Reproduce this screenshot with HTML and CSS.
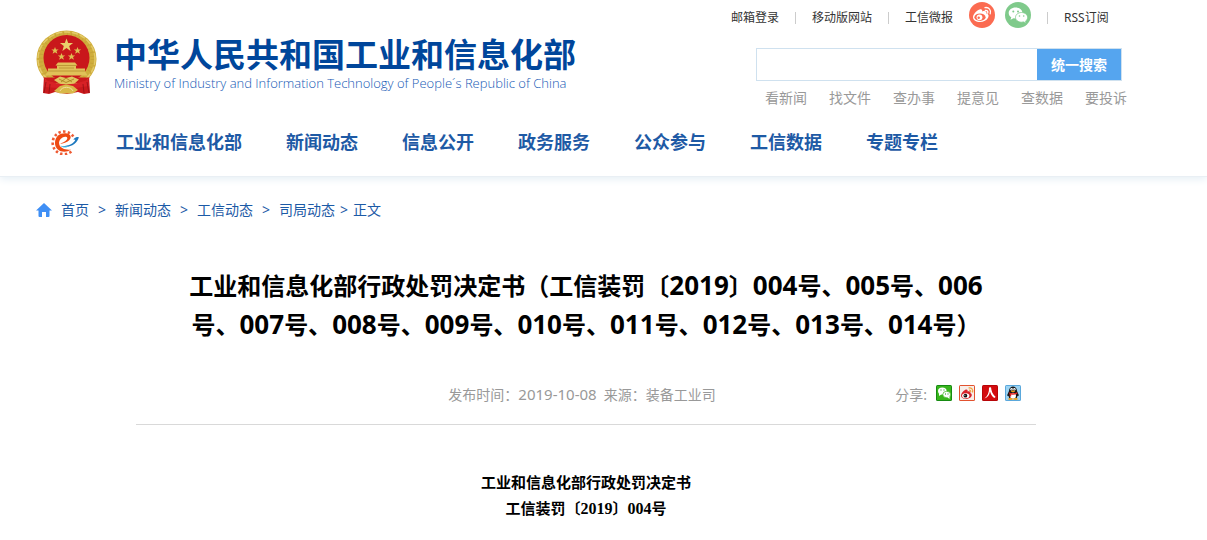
FILE: index.html
```html
<!DOCTYPE html>
<html lang="zh-CN">
<head>
<meta charset="utf-8">
<meta name="viewport" content="width=device-width, initial-scale=1">
<title>工业和信息化部行政处罚决定书</title>
<link rel="stylesheet" href="styles.css">
</head>
<body>
<header class="site-header">
  <div class="container">
    <div class="masthead">
      <a class="brand" href="#">
        <svg class="emblem" viewBox="0 0 61 66" aria-hidden="true">
          <path d="M8 46h45l1 17-6 1-6-2-11 2-12-2-6 2-6-1z" fill="#c9191c"/>
          <ellipse cx="30.500" cy="29" rx="30" ry="28.500" fill="#d0ae3c"/>
          <ellipse cx="30.500" cy="29" rx="26" ry="25" fill="none" stroke="#c6a338" stroke-width="4" stroke-dasharray="1 3"/>
          <ellipse cx="30.500" cy="29" rx="28.500" ry="27" fill="none" stroke="#e3ca69" stroke-width="1.500" stroke-dasharray="6 2"/>
          <ellipse cx="30.500" cy="28" rx="23" ry="23" fill="#c9171b"/>
          <path d="M30.500 8.500l1.700 4.600h4.900l-3.900 3 1.400 4.800-4.100-2.800-4.100 2.800 1.400-4.800-3.900-3h4.900z" fill="#e9d06b"/>
          <g fill="#dfbf52">
            <path d="M19 17l1 2.400h2.700l-2.200 1.700.9 2.700-2.400-1.500-2.400 1.500.9-2.700-2.200-1.700H18z"/>
            <path d="M41.500 17l1 2.400h2.700l-2.200 1.700.9 2.700-2.400-1.500-2.400 1.500.9-2.700-2.200-1.700h2.700z"/>
            <path d="M25.500 23l1 2.400h2.700L27 27.100l.9 2.700-2.400-1.500-2.400 1.500.9-2.700-2.200-1.700h2.700z"/>
            <path d="M35.500 23l1 2.400h2.700L37 27.100l.9 2.700-2.400-1.500-2.400 1.500.9-2.700-2.200-1.700h2.700z"/>
          </g>
          <path d="M22 32.500h17l2.500 3H40v3h9v3l3 4H9l3-4v-3h9v-3h-1.500z" fill="#e0c158"/>
          <path d="M21 35.500h19M12 41h37M23 38h15" stroke="#b58e2d" stroke-width=".8"/>
          <path d="M7 47.500h47l-6 5-9 1H22l-9-1z" fill="#c9191c"/>
          <path d="M18 50l6-3.500 6 1.500 6-1.500 7 3-5 4.500H24z" fill="#e0c45f"/>
          <path d="M23 49l7 3.500 8-3.500M25 52l5-4 6 4" fill="none" stroke="#a77d1b" stroke-width=".8"/>
          <path d="M9 50l12 3.500 9 1 10-1L52 50l1 6-13 2H21L8 57z" fill="#d72125"/>
          <path d="M18 61l6-5 6-1.500 7 1.500 5 4-5 3.500H24z" fill="#d8b848"/>
          <path d="M24 61c2-5 11-5 13 0" fill="none" stroke="#f3dfa0"/>
          <path d="M10 52l-2 11M14 54l-1 9M47 54l1 9M51 52l2 11" stroke="#8f1014" stroke-width=".8"/>
        </svg>
        <span class="brand-text">
          <span class="brand-name">中华人民共和国工业和信息化部</span>
          <span class="brand-en">Ministry of Industry and Information Technology of People´s Republic of China</span>
        </span>
      </a>
      <div class="tools">
        <div class="utility">
          <a href="#">邮箱登录</a><span class="bar"></span>
          <a href="#">移动版网站</a><span class="bar"></span>
          <a href="#">工信微报</a>
          <a class="social" href="#" aria-label="微博">
            <svg viewBox="0 0 26 26"><circle cx="13" cy="13" r="13" fill="#fb6b51"/><path d="M10.500 7.500c1.800-.8 3 .1 2.700 2 2.500-.9 4.800-.3 4.200 2 2 .6 2.700 2 1.800 4-1.300 2.900-4.700 4.500-8.200 4.500-4 0-7-1.900-7-4.800 0-2.700 3.300-6.500 6.500-7.700z" fill="#fff"/><ellipse cx="11" cy="15.200" rx="5.600" ry="3.700" fill="#fb6b51"/><circle cx="10.500" cy="15.300" r="2.900" fill="#fff"/><circle cx="9.700" cy="15.800" r="1.200" fill="#fb6b51"/><path d="M16 5.600c3.900-.7 6.500 2.600 5.200 6.200M16.300 8.400c1.900-.3 3 1 2.400 2.700" fill="none" stroke="#fff" stroke-width="1.300" stroke-linecap="round"/></svg>
          </a>
          <a class="social" href="#" aria-label="微信">
            <svg viewBox="0 0 26 26"><circle cx="13" cy="13" r="13" fill="#7fca8b"/><path d="M10.500 5.500c4 0 7 2.400 7 5.500s-3 5.400-7 5.400l-2-.2-3 1.600.8-2.500C4.600 14.300 3.700 12.800 3.700 11c0-3.100 3-5.500 6.800-5.500z" fill="#fff"/><path d="M16.500 10.500c3.500 0 6.100 2.200 6.100 4.900 0 1.500-.8 2.800-2 3.700l.6 2.100-2.500-1.300-2.200.3c-3.400 0-6-2.100-6-4.800s2.600-4.900 6-4.900z" fill="#fff" stroke="#7fca8b" stroke-width=".8"/><g fill="#7fca8b"><circle cx="8.300" cy="9.500" r="1"/><circle cx="13" cy="9.500" r="1"/><circle cx="14.500" cy="14" r=".8"/><circle cx="18.700" cy="14" r=".8"/></g></svg>
          </a>
          <span class="bar"></span>
          <a href="#">RSS订阅</a>
        </div>
        <form class="search">
          <input class="search-input" type="text" aria-label="搜索">
          <button class="search-button" type="button">统一搜索</button>
        </form>
        <div class="quick">
          <a href="#">看新闻</a><a href="#">找文件</a><a href="#">查办事</a><a href="#">提意见</a><a href="#">查数据</a><a href="#">要投诉</a>
        </div>
      </div>
    </div>
    <nav class="main-nav">
      <a class="nav-logo" href="#" aria-label="主页">
        <svg viewBox="0 0 30 26"><path d="M23.300 7.500A11.300 11.300 0 1 0 21.800 22" fill="none" stroke="#ee5a33" stroke-width="2.600" stroke-dasharray="2.400 2.300"/><path d="M21 20.500c-6 4.500-16 2-16-6.500C5 7 10.500 4 15.500 4.300c5 .3 6.800 4 3.700 7-2.300 2.200-6 3.400-9.200 3.500 4.500-1.500 7.500-3.600 7.300-5.700-.2-1.700-3-1.600-4.800-.6C9.500 10 8.500 13 9.300 15.500c1.200 4 6.500 5.800 11.700 5z" fill="#ee4a12"/><path d="M11 17c6 .8 13.500-2.600 14.300-6.200l-2-.2c2.200-2.900 4.700-2.800 5.500-2.400-1 6-9.800 12-17.800 8.800z" fill="#1d78be"/><path d="M10.500 16.500c3 1.500 6.500 1 9 0-2 2.500-7 3-9 0z" fill="#4fc3ec"/></svg>
      </a>
      <a href="#">工业和信息化部</a><a href="#">新闻动态</a><a href="#">信息公开</a><a href="#">政务服务</a><a href="#">公众参与</a><a href="#">工信数据</a><a href="#">专题专栏</a>
    </nav>
  </div>
</header>
<main class="page">
  <div class="container">
    <nav class="breadcrumb" aria-label="当前位置">
      <svg class="home" viewBox="0 0 16 14" aria-hidden="true"><path d="M8 0l8 7.500h-2.500V13a1 1 0 0 1-1 1H10V9H6v5H3.500a1 1 0 0 1-1-1V7.500H0z" fill="#3f8ff5"/></svg>
      <a href="#">首页</a><span>&gt;</span><a href="#">新闻动态</a><span>&gt;</span><a href="#">工信动态</a><span>&gt;</span>
      <span class="current"><a href="#">司局动态</a><span>&gt;</span><span>正文</span></span>
    </nav>
    <article class="article">
      <h1 class="title">工业和信息化部行政处罚决定书（工信装罚〔<b>2019</b>〕<b>004</b>号、<b>005</b>号、<b>006</b>号、<b>007</b>号、<b>008</b>号、<b>009</b>号、<b>010</b>号、<b>011</b>号、<b>012</b>号、<b>013</b>号、<b>014</b>号）</h1>
      <div class="meta">
        <p class="source"><span>发布时间：<span class="date">2019-10-08</span></span><span>来源：装备工业司</span></p>
        <div class="share">
          <span class="share-label">分享:</span>
          <a href="#" aria-label="微信"><svg viewBox="0 0 16 16"><rect width="16" height="16" rx="1.500" fill="#168b12"/><rect x="1" y="1" width="14" height="14" fill="#37b51b"/><ellipse cx="6.300" cy="6" rx="4.300" ry="3.500" fill="#fff"/><path d="M3 8v3l3-2z" fill="#fff"/><ellipse cx="10.700" cy="9.500" rx="3.900" ry="3.200" fill="#fff" stroke="#37b51b" stroke-width=".7"/><path d="M13.500 11v3L11 12z" fill="#fff"/><path d="M4.500 5h1M7.500 5h1M9 9h1M11.500 9h1" stroke="#168b12"/></svg></a>
          <a href="#" aria-label="新浪微博"><svg viewBox="0 0 16 16"><rect width="16" height="16" rx="1.500" fill="#e2522f"/><rect x="1" y="1" width="14" height="14" fill="#f7eee9"/><path d="M6 5c2-1 3 0 2.500 1.500 2-.7 3.500 0 2.800 1.600 1.800.6 2 2.500.7 4C9.500 15 2 14.300 2 10.500 2 8.500 4 6 6 5z" fill="#d8232a"/><ellipse cx="6.700" cy="10.700" rx="3.700" ry="2.500" fill="#fff"/><circle cx="6.400" cy="10.700" r="1.900" fill="#111"/><circle cx="5.900" cy="10.300" r=".5" fill="#fff"/><path d="M9.500 3c3-.7 5 1.800 4 4.500M10 5c1.500 0 2 .8 1.600 2" fill="none" stroke="#f3a13b" stroke-width="1.200"/></svg></a>
          <a href="#" aria-label="人民微博"><svg viewBox="0 0 16 16"><rect width="16" height="16" rx="1.500" fill="#b70508"/><rect x="1" y="1" width="14" height="14" fill="#d30b0e"/><path d="M7 2.500l2-.3c.3 3.500 1.500 7 4.700 9.800l-1.500 1C9.700 11 8.500 8.500 8 6.500 7.500 10 5.500 12.500 2.500 13.500 5.500 11 7.300 7.500 7 2.500z" fill="#fff"/></svg></a>
          <a href="#" aria-label="QQ好友"><svg viewBox="0 0 16 16"><rect width="16" height="16" rx="1.500" fill="#5aa8dc"/><rect x="1" y="1" width="14" height="14" fill="#9bd3f3"/><path d="M4 6c0-6 8-6 8 0l2 4.500-1.500.5-1 2.500h-7L3.500 11 2 10.500z" fill="#151515"/><ellipse cx="8" cy="10.800" rx="3" ry="3" fill="#fff"/><circle cx="6.600" cy="4.300" r="1.200" fill="#fff"/><circle cx="9.400" cy="4.300" r="1.200" fill="#fff"/><path d="M6.900 4v1M9.100 4v1" stroke="#111" stroke-width=".6"/><ellipse cx="8" cy="6.300" rx="2.200" ry=".8" fill="#f6a617"/><path d="M3.800 7.300c2.500 1.400 6 1.400 8.400 0l.2 1.400c-2 1-4.500 1.300-6.200.9v2H4.800l-.2-2.600z" fill="#de2323"/><ellipse cx="5.500" cy="14" rx="2.300" ry="1" fill="#f3a11c"/><ellipse cx="10.500" cy="14" rx="2.300" ry="1" fill="#f3a11c"/></svg></a>
        </div>
      </div>
      <div class="content">
        <p>工业和信息化部行政处罚决定书</p>
        <p>工信装罚〔<b>2019</b>〕<b>004</b>号</p>
      </div>
    </article>
  </div>
</main>
</body>
</html>
```
FILE: styles.css
```css
* {
  box-sizing: border-box;
}

body {
  margin: 0;
  background: #fff;
  color: #000;
  font-family: "Noto Sans", "Noto Sans CJK SC", sans-serif;
  font-size: 14px;
  line-height: 20px;
}

a {
  color: inherit;
  text-decoration: none;
}

p {
  margin: 0;
}

svg {
  display: block;
}

.site-header,
.page {
  padding-right: 35px;
}

.site-header {
  border-bottom: 1px solid #e9eff4;
  box-shadow: 0 2px 8px #e4eef5;
}

.container {
  max-width: 1100px;
  margin: 0 auto;
}

.masthead {
  display: flex;
  justify-content: space-between;
}

.brand {
  display: flex;
  gap: 17px;
  padding-top: 30px;
}

.emblem {
  width: 61px;
  height: 66px;
}

.brand-text {
  display: flex;
  flex-direction: column;
  padding-top: 1px;
  white-space: nowrap;
}

.brand-name {
  color: #00469b;
  font-family: "Noto Sans CJK SC", sans-serif;
  font-size: 33px;
  font-weight: 700;
  line-height: 44px;
}

.brand-en {
  color: #1559b5;
  font-family: "Open Sans", sans-serif;
  font-size: 13px;
  font-weight: 300;
  line-height: 16px;
}

.tools {
  width: 405px;
  padding-top: 2px;
}

.utility {
  display: flex;
  align-items: center;
  gap: 16px;
  height: 32px;
  color: #333;
  font-size: 12px;
  white-space: nowrap;
}

.bar {
  width: 1px;
  height: 12px;
  background: #ccc;
}

.social {
  align-self: flex-start;
}

.social + .social {
  margin-left: -6px;
}

.social svg {
  width: 26px;
  height: 26px;
}

.search {
  display: flex;
  width: 366px;
  height: 33px;
  margin: 14px 0 0 25px;
  border: 1px solid #cfe1ef;
}

.search-input {
  flex: 1;
  min-width: 0;
  padding: 0 8px;
  border: 0;
  outline: 0;
  font: inherit;
}

.search-button {
  width: 84px;
  padding: 0;
  border: 0;
  background: #55a5ef;
  color: #fff;
  font: inherit;
  font-weight: 700;
}

.quick {
  display: flex;
  gap: 22px;
  padding: 7px 0 0 34px;
  color: #999;
  white-space: nowrap;
}

.main-nav {
  display: flex;
  align-items: center;
  gap: 44px;
  height: 68px;
  padding-left: 14px;
  color: #1e5aa5;
  font-size: 18px;
  font-weight: 700;
  line-height: 24px;
  white-space: nowrap;
}

.nav-logo {
  margin-right: -8px;
}

.nav-logo svg {
  width: 30px;
  height: 26px;
}

.breadcrumb {
  display: flex;
  align-items: center;
  gap: 9px;
  padding-top: 23px;
  color: #1c5aa6;
  white-space: nowrap;
}

.current {
  display: flex;
  gap: 5px;
}

.home {
  width: 16px;
  height: 14px;
}

.article {
  max-width: 900px;
  margin: 0 auto;
  padding-top: 46px;
}

.title {
  max-width: 800px;
  margin: 0 auto;
  font-size: 24px;
  line-height: 39px;
  text-align: center;
}

.title b {
  font-size: 26px;
  font-weight: 700;
}

.meta {
  display: grid;
  grid-template-columns: 1fr auto 1fr;
  align-items: center;
  margin-top: 33px;
  padding: 8px 15px 19px;
  border-bottom: 1px solid #d9d9d9;
  color: #999;
}

.source {
  display: flex;
  grid-column: 2;
  gap: 7px;
  padding-right: 8px;
}

.date {
  font-size: 15px;
  line-height: 18px;
}

.share {
  display: flex;
  gap: 7px;
  justify-content: flex-end;
}

.share-label {
  margin-right: 2px;
}

.share svg {
  width: 16px;
  height: 16px;
}

.content {
  padding-top: 45px;
  font-family: "Liberation Serif", "Noto Sans CJK SC", serif;
  font-size: 15px;
  font-weight: 700;
  line-height: 26px;
  text-align: center;
}

.content b {
  font-size: 16px;
}
```
